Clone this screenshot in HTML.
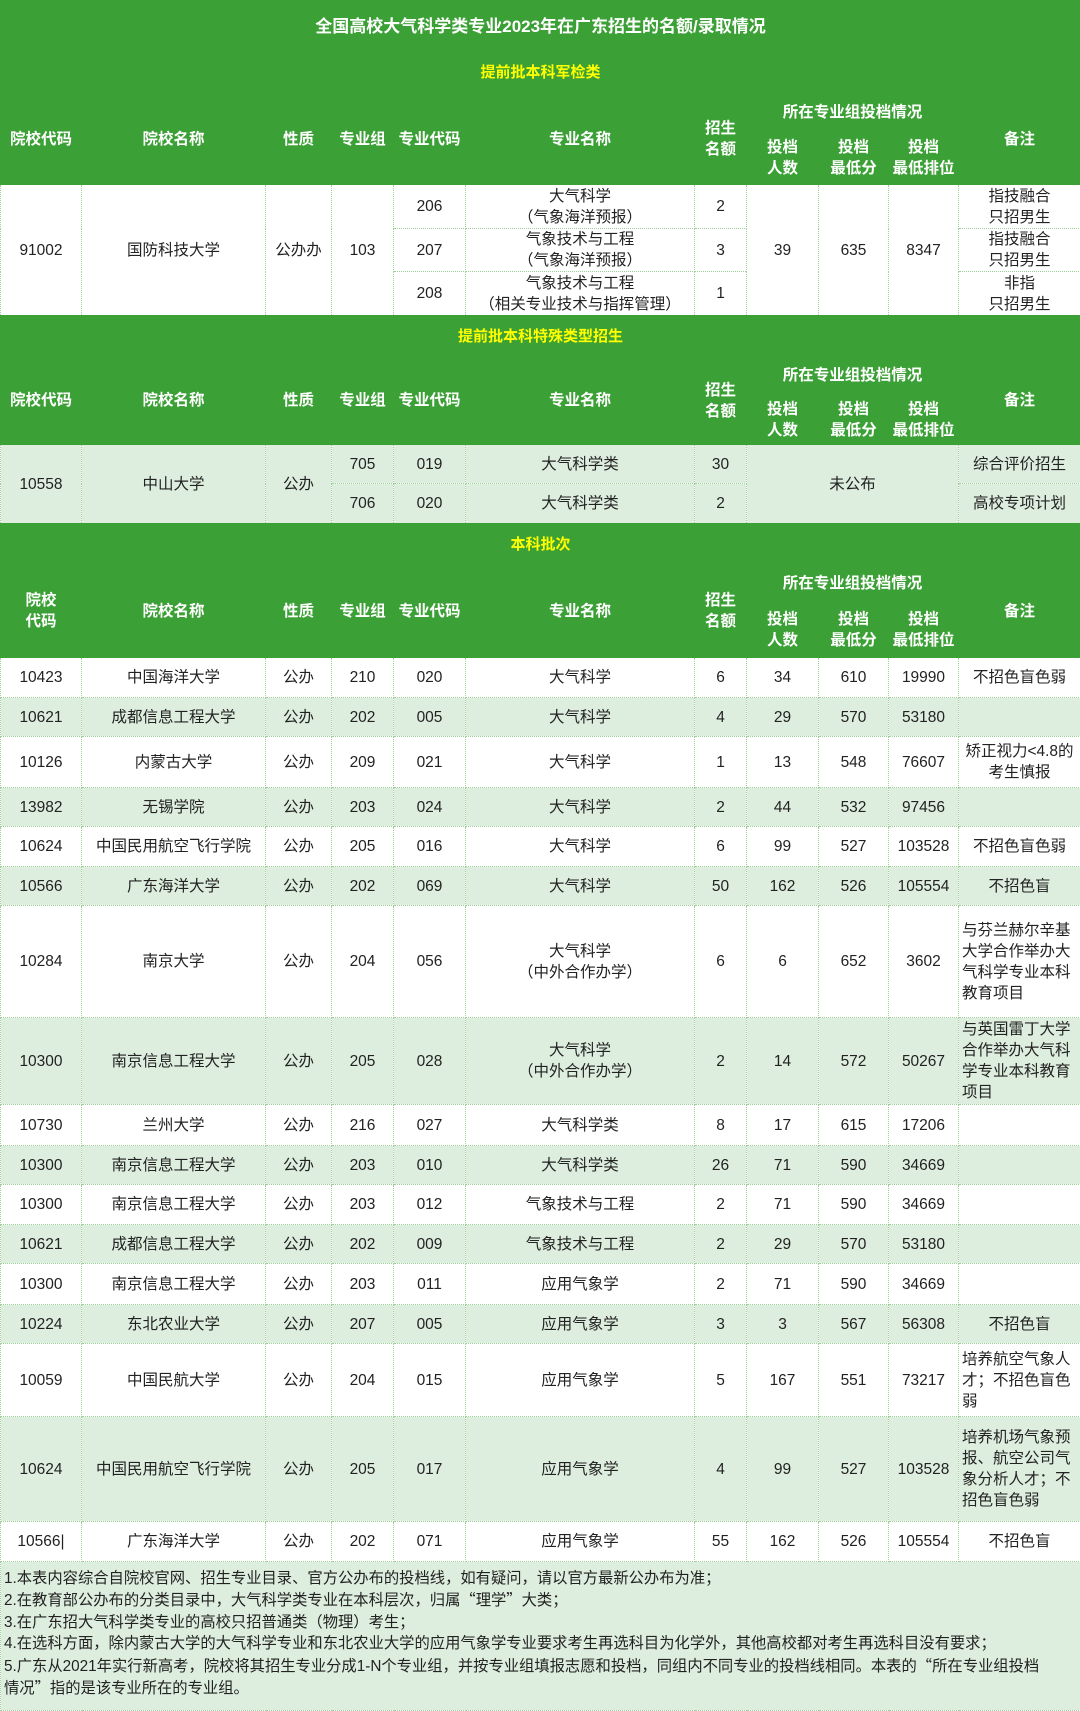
<!DOCTYPE html>
<html><head><meta charset="utf-8">
<style>
body{margin:0;width:1080px;height:1679px;overflow:hidden;background:#fff;font-family:"Liberation Sans","Noto Sans CJK SC",sans-serif;}
table{border-collapse:collapse;table-layout:fixed;width:1080px;}
td{border:1px dotted #9dcf98;text-align:center;vertical-align:middle;padding:0;font-size:15.5px;line-height:21px;color:#222;overflow:hidden;}
tr.g td{background:#3ba035;border:1px solid #3ba035;color:#fff;font-weight:bold;}
tr.t td{font-size:17px;}
tr.s td{color:#ffff00;font-size:15px;}
tr.l td, td.l{background:#deeede;}
td.r{text-align:left;padding-left:3px;line-height:21px;}
.notes td{background:#deeede;text-align:left;font-size:15.3px;line-height:21.4px;padding:6px 3px;vertical-align:top;border-color:#9dcf98;}
.q{font-family:"Noto Sans CJK SC",sans-serif;}
</style></head><body>
<table>
<colgroup><col style="width:81px"><col style="width:184px"><col style="width:66px"><col style="width:62px"><col style="width:72px"><col style="width:229px"><col style="width:52px"><col style="width:72px"><col style="width:70px"><col style="width:70px"><col style="width:122px"></colgroup>
<tr class="g t"><td colspan="11" style="height:50px">全国高校大气科学类专业2023年在广东招生的名额/录取情况</td></tr>
<tr class="g s"><td colspan="11" style="height:41px">提前批本科军检类</td></tr>
<tr class="g"><td rowspan="2">院校代码</td><td rowspan="2">院校名称</td><td rowspan="2">性质</td><td rowspan="2">专业组</td><td rowspan="2">专业代码</td><td rowspan="2">专业名称</td><td rowspan="2">招生<br>名额</td><td colspan="3" style="height:37px">所在专业组投档情况</td><td rowspan="2">备注</td></tr>
<tr class="g"><td style="height:52px">投档<br>人数</td><td>投档<br>最低分</td><td>投档<br>最低排位</td></tr>
<tr><td rowspan="3">91002</td><td rowspan="3">国防科技大学</td><td rowspan="3">公办办</td><td rowspan="3">103</td><td style="height:43px">206</td><td>大气科学<br>（气象海洋预报）</td><td>2</td><td rowspan="3">39</td><td rowspan="3">635</td><td rowspan="3">8347</td><td>指技融合<br>只招男生</td></tr>
<tr><td style="height:42px">207</td><td>气象技术与工程<br>（气象海洋预报）</td><td>3</td><td>指技融合<br>只招男生</td></tr>
<tr><td style="height:43px">208</td><td>气象技术与工程<br>（相关专业技术与指挥管理）</td><td>1</td><td>非指<br>只招男生</td></tr>
<tr class="g s"><td colspan="11" style="height:40px">提前批本科特殊类型招生</td></tr>
<tr class="g"><td rowspan="2">院校代码</td><td rowspan="2">院校名称</td><td rowspan="2">性质</td><td rowspan="2">专业组</td><td rowspan="2">专业代码</td><td rowspan="2">专业名称</td><td rowspan="2">招生<br>名额</td><td colspan="3" style="height:37px">所在专业组投档情况</td><td rowspan="2">备注</td></tr>
<tr class="g"><td style="height:49px">投档<br>人数</td><td>投档<br>最低分</td><td>投档<br>最低排位</td></tr>
<tr class="l"><td rowspan="2">10558</td><td rowspan="2">中山大学</td><td rowspan="2">公办</td><td style="height:38px">705</td><td>019</td><td>大气科学类</td><td>30</td><td rowspan="2" colspan="3">未公布</td><td>综合评价招生</td></tr>
<tr class="l"><td style="height:39px">706</td><td>020</td><td>大气科学类</td><td>2</td><td>高校专项计划</td></tr>
<tr class="g s"><td colspan="11" style="height:40px">本科批次</td></tr>
<tr class="g"><td rowspan="2">院校<br>代码</td><td rowspan="2">院校名称</td><td rowspan="2">性质</td><td rowspan="2">专业组</td><td rowspan="2">专业代码</td><td rowspan="2">专业名称</td><td rowspan="2">招生<br>名额</td><td colspan="3" style="height:37px">所在专业组投档情况</td><td rowspan="2">备注</td></tr>
<tr class="g"><td style="height:54px">投档<br>人数</td><td>投档<br>最低分</td><td>投档<br>最低排位</td></tr>
<tr><td style="height:39px">10423</td><td>中国海洋大学</td><td>公办</td><td>210</td><td>020</td><td>大气科学</td><td>6</td><td>34</td><td>610</td><td>19990</td><td>不招色盲色弱</td></tr>
<tr class="l"><td style="height:38px">10621</td><td>成都信息工程大学</td><td>公办</td><td>202</td><td>005</td><td>大气科学</td><td>4</td><td>29</td><td>570</td><td>53180</td><td></td></tr>
<tr><td style="height:50px">10126</td><td>内蒙古大学</td><td>公办</td><td>209</td><td>021</td><td>大气科学</td><td>1</td><td>13</td><td>548</td><td>76607</td><td>矫正视力&lt;4.8的<br>考生慎报</td></tr>
<tr class="l"><td style="height:38px">13982</td><td>无锡学院</td><td>公办</td><td>203</td><td>024</td><td>大气科学</td><td>2</td><td>44</td><td>532</td><td>97456</td><td></td></tr>
<tr><td style="height:39px">10624</td><td>中国民用航空飞行学院</td><td>公办</td><td>205</td><td>016</td><td>大气科学</td><td>6</td><td>99</td><td>527</td><td>103528</td><td>不招色盲色弱</td></tr>
<tr class="l"><td style="height:38px">10566</td><td>广东海洋大学</td><td>公办</td><td>202</td><td>069</td><td>大气科学</td><td>50</td><td>162</td><td>526</td><td>105554</td><td>不招色盲</td></tr>
<tr><td style="height:111px">10284</td><td>南京大学</td><td>公办</td><td>204</td><td>056</td><td>大气科学<br>（中外合作办学）</td><td>6</td><td>6</td><td>652</td><td>3602</td><td class="r">与芬兰赫尔辛基大学合作举办大气科学专业本科教育项目</td></tr>
<tr class="l"><td style="height:86px">10300</td><td>南京信息工程大学</td><td>公办</td><td>205</td><td>028</td><td>大气科学<br>（中外合作办学）</td><td>2</td><td>14</td><td>572</td><td>50267</td><td class="r">与英国雷丁大学合作举办大气科学专业本科教育项目</td></tr>
<tr><td style="height:40px">10730</td><td>兰州大学</td><td>公办</td><td>216</td><td>027</td><td>大气科学类</td><td>8</td><td>17</td><td>615</td><td>17206</td><td></td></tr>
<tr class="l"><td style="height:38px">10300</td><td>南京信息工程大学</td><td>公办</td><td>203</td><td>010</td><td>大气科学类</td><td>26</td><td>71</td><td>590</td><td>34669</td><td></td></tr>
<tr><td style="height:39px">10300</td><td>南京信息工程大学</td><td>公办</td><td>203</td><td>012</td><td>气象技术与工程</td><td>2</td><td>71</td><td>590</td><td>34669</td><td></td></tr>
<tr class="l"><td style="height:38px">10621</td><td>成都信息工程大学</td><td>公办</td><td>202</td><td>009</td><td>气象技术与工程</td><td>2</td><td>29</td><td>570</td><td>53180</td><td></td></tr>
<tr><td style="height:40px">10300</td><td>南京信息工程大学</td><td>公办</td><td>203</td><td>011</td><td>应用气象学</td><td>2</td><td>71</td><td>590</td><td>34669</td><td></td></tr>
<tr class="l"><td style="height:38px">10224</td><td>东北农业大学</td><td>公办</td><td>207</td><td>005</td><td>应用气象学</td><td>3</td><td>3</td><td>567</td><td>56308</td><td>不招色盲</td></tr>
<tr><td style="height:72px">10059</td><td>中国民航大学</td><td>公办</td><td>204</td><td>015</td><td>应用气象学</td><td>5</td><td>167</td><td>551</td><td>73217</td><td class="r">培养航空气象人才；不招色盲色弱</td></tr>
<tr class="l"><td style="height:104px">10624</td><td>中国民用航空飞行学院</td><td>公办</td><td>205</td><td>017</td><td>应用气象学</td><td>4</td><td>99</td><td>527</td><td>103528</td><td class="r">培养机场气象预报、航空公司气象分析人才；不招色盲色弱</td></tr>
<tr><td style="height:39px">10566|</td><td>广东海洋大学</td><td>公办</td><td>202</td><td>071</td><td>应用气象学</td><td>55</td><td>162</td><td>526</td><td>105554</td><td>不招色盲</td></tr>
<tr class="notes"><td colspan="11" style="height:136px">1.本表内容综合自院校官网、招生专业目录、官方公办布的投档线，如有疑问，请以官方最新公办布为准；<br>2.在教育部公办布的分类目录中，大气科学类专业在本科层次，归属<span class="q">“</span>理学<span class="q">”</span>大类；<br>3.在广东招大气科学类专业的高校只招普通类（物理）考生；<br>4.在选科方面，除内蒙古大学的大气科学专业和东北农业大学的应用气象学专业要求考生再选科目为化学外，其他高校都对考生再选科目没有要求；<br>5.广东从2021年实行新高考，院校将其招生专业分成1-N个专业组，并按专业组填报志愿和投档，同组内不同专业的投档线相同。本表的<span class="q">“</span>所在专业组投档<br>情况<span class="q">”</span>指的是该专业所在的专业组。</td></tr>
</table>
</body></html>
